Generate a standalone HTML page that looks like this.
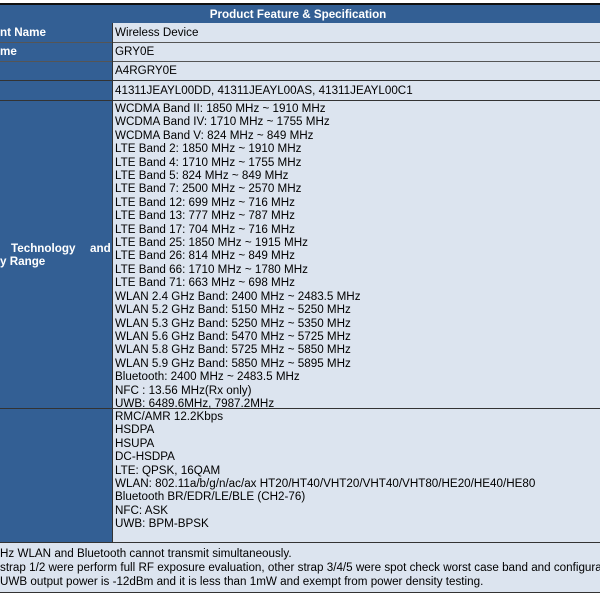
<!DOCTYPE html><html><head><style>
body{margin:0;width:600px;height:600px;background:#fff;position:relative;overflow:hidden;font-family:"Liberation Sans",Arial,sans-serif;font-size:11.65px;}
.a{position:absolute;box-sizing:border-box;}
.L{left:0;width:112px;background:#335f94;color:#fff;font-weight:bold;}
.R{left:112px;width:488px;background:#dce4ef;color:#000;padding-left:3px;}
.ln{position:absolute;left:0;width:600px;height:1px;background:#333;}
.t{line-height:13.4px;white-space:nowrap;}
</style></head><body>
<div class="a" style="top:4px;left:0;width:600px;height:19px;background:#335f94;color:#fff;font-weight:bold;text-align:center;line-height:21px;padding-left:0;padding-right:4px">Product Feature &amp; Specification</div>
<div class="a L" style="top:23px;height:19px;line-height:20px;">nt Name</div>
<div class="a R" style="top:23px;height:19px;line-height:20px;">Wireless Device</div>
<div class="a L" style="top:42px;height:19px;line-height:20px;">me</div>
<div class="a R" style="top:42px;height:19px;line-height:20px;">GRY0E</div>
<div class="a L" style="top:61px;height:19px;"></div>
<div class="a R" style="top:61px;height:19px;line-height:20px;">A4RGRY0E</div>
<div class="a L" style="top:80px;height:20px;"></div>
<div class="a R" style="top:80px;height:20px;line-height:21px;">41311JEAYL00DD, 41311JEAYL00AS, 41311JEAYL00C1</div>
<div class="a L" style="top:100px;height:308px;"><div style="position:absolute;top:142px;left:11px;line-height:13.4px;white-space:nowrap">Technology</div><div style="position:absolute;top:142px;left:90px;line-height:13.4px">and</div><div style="position:absolute;top:155px;left:0;line-height:13.4px;white-space:nowrap">y Range</div></div>
<div class="a R t" style="top:100px;height:308px;padding-top:2px;">WCDMA Band II: 1850 MHz ~ 1910 MHz<br>WCDMA Band IV: 1710 MHz ~ 1755 MHz<br>WCDMA Band V: 824 MHz ~ 849 MHz<br>LTE Band 2: 1850 MHz ~ 1910 MHz<br>LTE Band 4: 1710 MHz ~ 1755 MHz<br>LTE Band 5: 824 MHz ~ 849 MHz<br>LTE Band 7: 2500 MHz ~ 2570 MHz<br>LTE Band 12: 699 MHz ~ 716 MHz<br>LTE Band 13: 777 MHz ~ 787 MHz<br>LTE Band 17: 704 MHz ~ 716 MHz<br>LTE Band 25: 1850 MHz ~ 1915 MHz<br>LTE Band 26: 814 MHz ~ 849 MHz<br>LTE Band 66: 1710 MHz ~ 1780 MHz<br>LTE Band 71: 663 MHz ~ 698 MHz<br>WLAN 2.4 GHz Band: 2400 MHz ~ 2483.5 MHz<br>WLAN 5.2 GHz Band: 5150 MHz ~ 5250 MHz<br>WLAN 5.3 GHz Band: 5250 MHz ~ 5350 MHz<br>WLAN 5.6 GHz Band: 5470 MHz ~ 5725 MHz<br>WLAN 5.8 GHz Band: 5725 MHz ~ 5850 MHz<br>WLAN 5.9 GHz Band: 5850 MHz ~ 5895 MHz<br>Bluetooth: 2400 MHz ~ 2483.5 MHz<br>NFC : 13.56 MHz(Rx only)<br>UWB: 6489.6MHz, 7987.2MHz</div>
<div class="a L" style="top:408px;height:134px;"></div>
<div class="a R t" style="top:408px;height:134px;padding-top:2px;">RMC/AMR 12.2Kbps<br>HSDPA<br>HSUPA<br>DC-HSDPA<br>LTE: QPSK, 16QAM<br>WLAN: 802.11a/b/g/n/ac/ax HT20/HT40/VHT20/VHT40/VHT80/HE20/HE40/HE80<br>Bluetooth BR/EDR/LE/BLE (CH2-76)<br>NFC: ASK<br>UWB: BPM-BPSK</div>
<div class="a" style="top:542px;left:0;width:600px;height:50px;background:#dce4ef;"></div>
<div class="a t" style="top:547px;left:0;line-height:14px">Hz WLAN and Bluetooth cannot transmit simultaneously.<br>strap 1/2 were perform full RF exposure evaluation, other strap 3/4/5 were spot check worst case band and configurati<br>UWB output power is -12dBm and it is less than 1mW and exempt from power density testing.</div>
<div class="ln" style="top:3px;height:2px;background:#111"></div>
<div class="ln" style="top:42px;background:#555"></div>
<div class="ln" style="top:61px;background:#555"></div>
<div class="ln" style="top:80px"></div>
<div class="ln" style="top:100px"></div>
<div class="ln" style="top:408px"></div>
<div class="ln" style="top:542px"></div>
<div class="ln" style="top:592px"></div>
<div class="a" style="left:112px;top:23px;width:1px;height:519px;background:#333"></div>
</body></html>
